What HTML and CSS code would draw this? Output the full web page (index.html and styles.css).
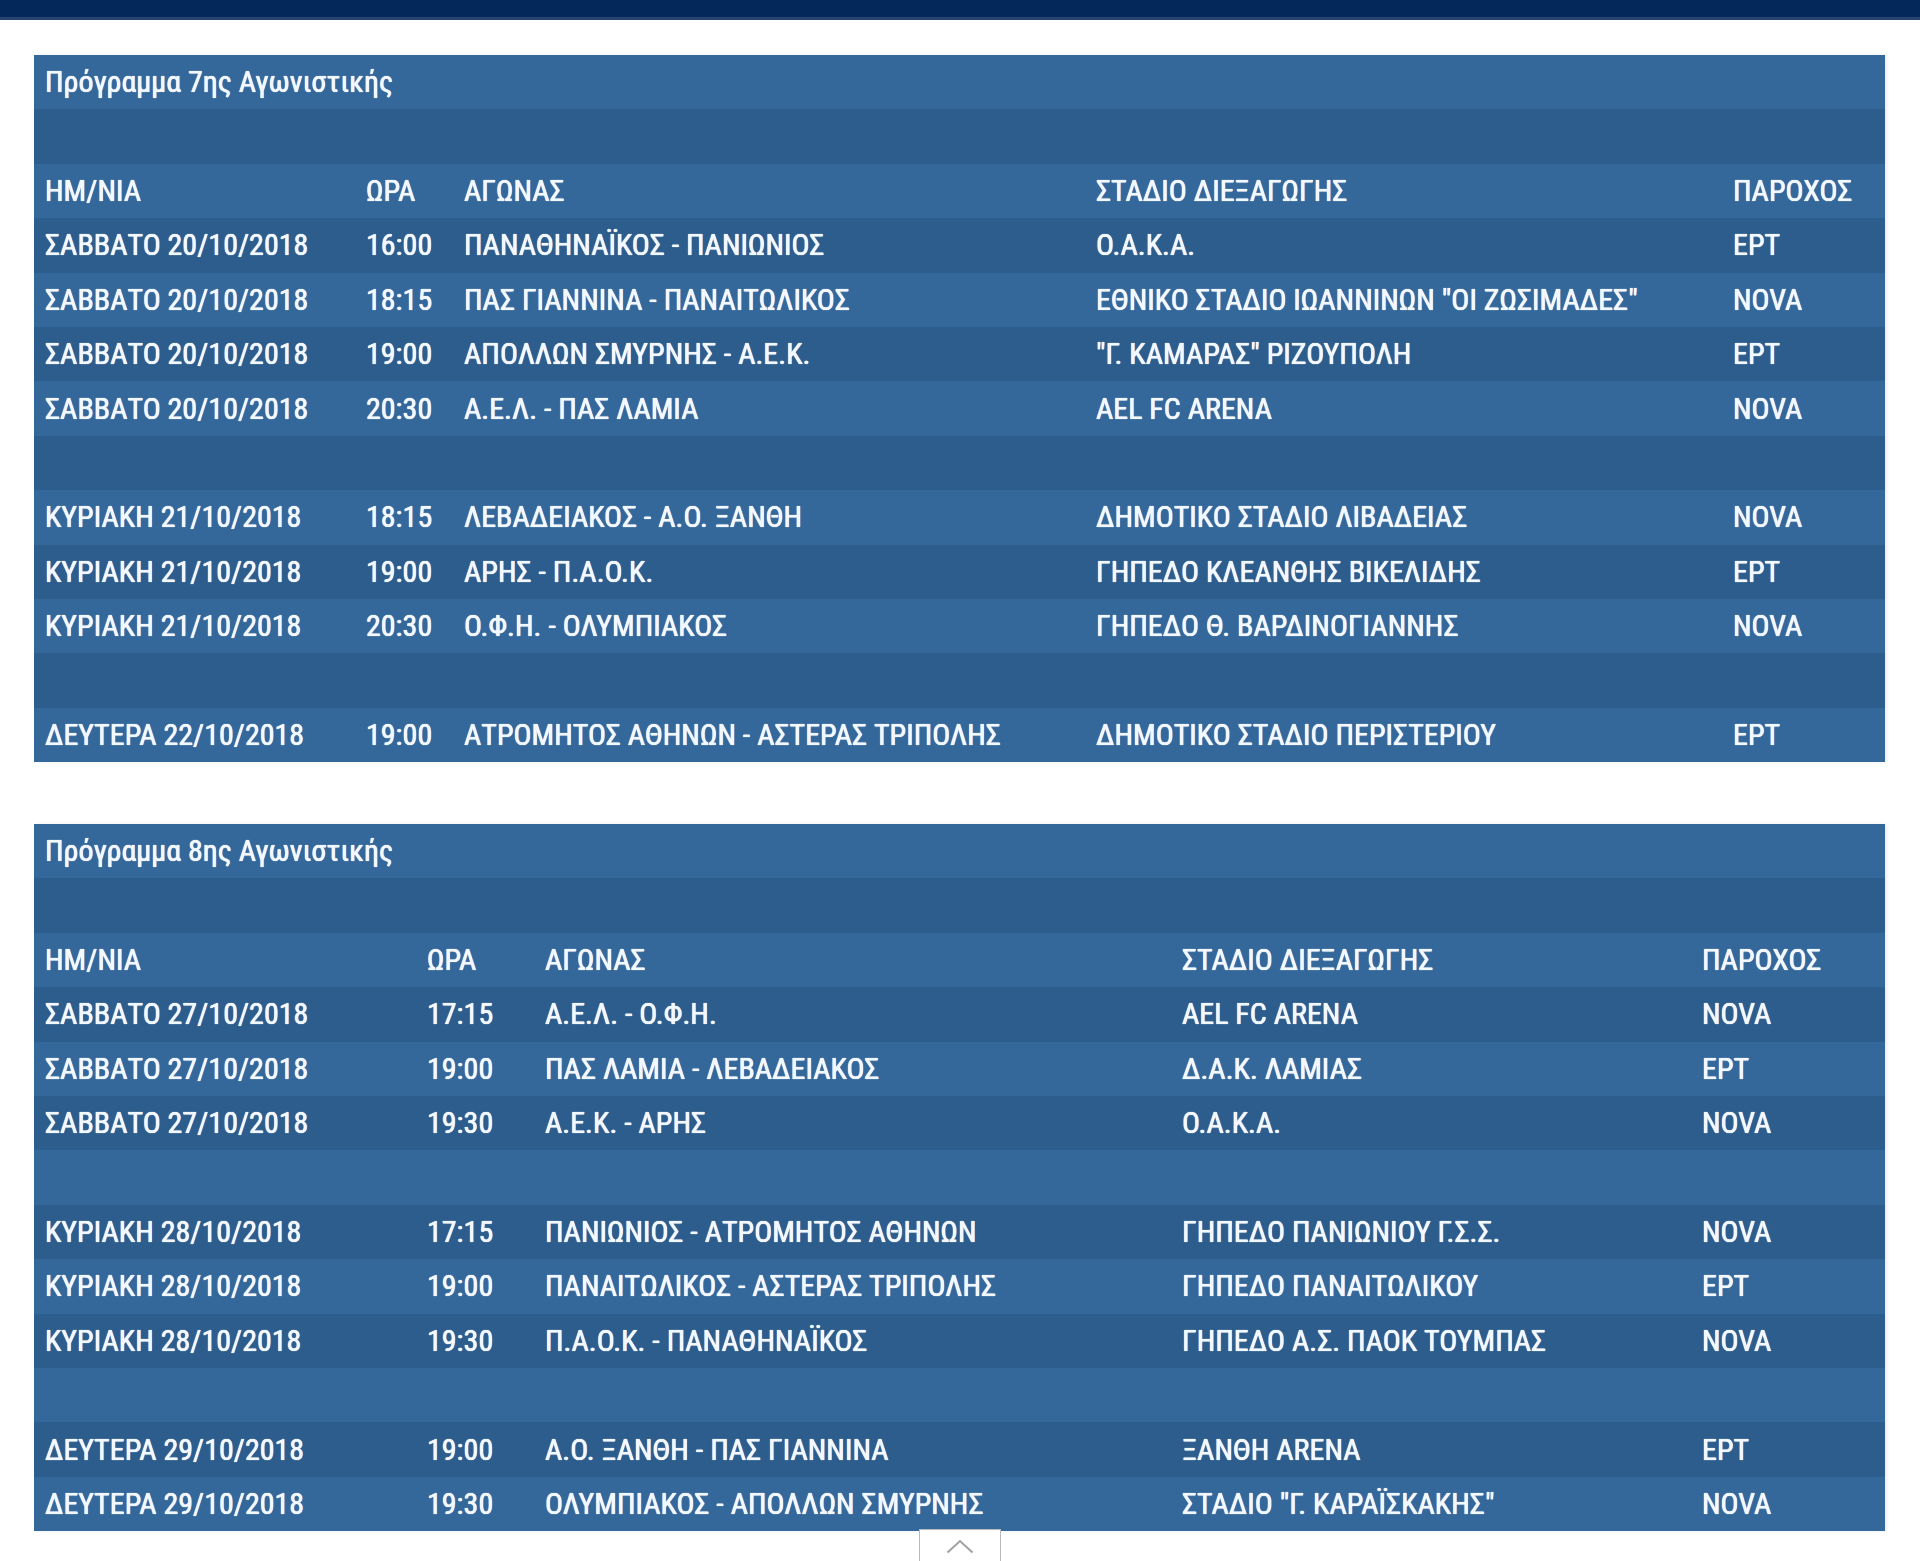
FILE: index.html
```html
<!DOCTYPE html>
<html lang="el">
<head>
<meta charset="utf-8">
<title>Πρόγραμμα Αγωνιστικών</title>
<link rel="stylesheet" href="styles.css">
</head>
<body>
<div class="topbar"></div>
<main class="content">
  <table class="fixtures t7">
    <colgroup>
      <col class="c1"><col class="c2"><col class="c3"><col class="c4"><col class="c5">
    </colgroup>
    <tbody>
      <tr class="title"><td colspan="5">Πρόγραμμα 7ης Αγωνιστικής</td></tr>
      <tr class="blank"><td colspan="5"></td></tr>
      <tr class="head"><td>ΗΜ/ΝΙΑ</td><td>ΩΡΑ</td><td>ΑΓΩΝΑΣ</td><td>ΣΤΑΔΙΟ ΔΙΕΞΑΓΩΓΗΣ</td><td>ΠΑΡΟΧΟΣ</td></tr>
      <tr><td>ΣΑΒΒΑΤΟ 20/10/2018</td><td>16:00</td><td>ΠΑΝΑΘΗΝΑΪΚΟΣ - ΠΑΝΙΩΝΙΟΣ</td><td>Ο.Α.Κ.Α.</td><td>ΕΡΤ</td></tr>
      <tr><td>ΣΑΒΒΑΤΟ 20/10/2018</td><td>18:15</td><td>ΠΑΣ ΓΙΑΝΝΙΝΑ - ΠΑΝΑΙΤΩΛΙΚΟΣ</td><td>ΕΘΝΙΚΟ ΣΤΑΔΙΟ ΙΩΑΝΝΙΝΩΝ "ΟΙ ΖΩΣΙΜΑΔΕΣ"</td><td>NOVA</td></tr>
      <tr><td>ΣΑΒΒΑΤΟ 20/10/2018</td><td>19:00</td><td>ΑΠΟΛΛΩΝ ΣΜΥΡΝΗΣ - Α.Ε.Κ.</td><td>"Γ. ΚΑΜΑΡΑΣ" ΡΙΖΟΥΠΟΛΗ</td><td>ΕΡΤ</td></tr>
      <tr><td>ΣΑΒΒΑΤΟ 20/10/2018</td><td>20:30</td><td>Α.Ε.Λ. - ΠΑΣ ΛΑΜΙΑ</td><td>AEL FC ARENA</td><td>NOVA</td></tr>
      <tr class="blank"><td colspan="5"></td></tr>
      <tr><td>ΚΥΡΙΑΚΗ 21/10/2018</td><td>18:15</td><td>ΛΕΒΑΔΕΙΑΚΟΣ - Α.Ο. ΞΑΝΘΗ</td><td>ΔΗΜΟΤΙΚΟ ΣΤΑΔΙΟ ΛΙΒΑΔΕΙΑΣ</td><td>NOVA</td></tr>
      <tr><td>ΚΥΡΙΑΚΗ 21/10/2018</td><td>19:00</td><td>ΑΡΗΣ - Π.Α.Ο.Κ.</td><td>ΓΗΠΕΔΟ ΚΛΕΑΝΘΗΣ ΒΙΚΕΛΙΔΗΣ</td><td>ΕΡΤ</td></tr>
      <tr><td>ΚΥΡΙΑΚΗ 21/10/2018</td><td>20:30</td><td>Ο.Φ.Η. - ΟΛΥΜΠΙΑΚΟΣ</td><td>ΓΗΠΕΔΟ Θ. ΒΑΡΔΙΝΟΓΙΑΝΝΗΣ</td><td>NOVA</td></tr>
      <tr class="blank"><td colspan="5"></td></tr>
      <tr><td>ΔΕΥΤΕΡΑ 22/10/2018</td><td>19:00</td><td>ΑΤΡΟΜΗΤΟΣ ΑΘΗΝΩΝ - ΑΣΤΕΡΑΣ ΤΡΙΠΟΛΗΣ</td><td>ΔΗΜΟΤΙΚΟ ΣΤΑΔΙΟ ΠΕΡΙΣΤΕΡΙΟΥ</td><td>ΕΡΤ</td></tr>
    </tbody>
  </table>

  <table class="fixtures t8">
    <colgroup>
      <col class="c1"><col class="c2"><col class="c3"><col class="c4"><col class="c5">
    </colgroup>
    <tbody>
      <tr class="title"><td colspan="5">Πρόγραμμα 8ης Αγωνιστικής</td></tr>
      <tr class="blank"><td colspan="5"></td></tr>
      <tr class="head"><td>ΗΜ/ΝΙΑ</td><td>ΩΡΑ</td><td>ΑΓΩΝΑΣ</td><td>ΣΤΑΔΙΟ ΔΙΕΞΑΓΩΓΗΣ</td><td>ΠΑΡΟΧΟΣ</td></tr>
      <tr><td>ΣΑΒΒΑΤΟ 27/10/2018</td><td>17:15</td><td>Α.Ε.Λ. - Ο.Φ.Η.</td><td>AEL FC ARENA</td><td>NOVA</td></tr>
      <tr><td>ΣΑΒΒΑΤΟ 27/10/2018</td><td>19:00</td><td>ΠΑΣ ΛΑΜΙΑ - ΛΕΒΑΔΕΙΑΚΟΣ</td><td>Δ.Α.Κ. ΛΑΜΙΑΣ</td><td>ΕΡΤ</td></tr>
      <tr><td>ΣΑΒΒΑΤΟ 27/10/2018</td><td>19:30</td><td>Α.Ε.Κ. - ΑΡΗΣ</td><td>Ο.Α.Κ.Α.</td><td>NOVA</td></tr>
      <tr class="blank"><td colspan="5"></td></tr>
      <tr><td>ΚΥΡΙΑΚΗ 28/10/2018</td><td>17:15</td><td>ΠΑΝΙΩΝΙΟΣ - ΑΤΡΟΜΗΤΟΣ ΑΘΗΝΩΝ</td><td>ΓΗΠΕΔΟ ΠΑΝΙΩΝΙΟΥ Γ.Σ.Σ.</td><td>NOVA</td></tr>
      <tr><td>ΚΥΡΙΑΚΗ 28/10/2018</td><td>19:00</td><td>ΠΑΝΑΙΤΩΛΙΚΟΣ - ΑΣΤΕΡΑΣ ΤΡΙΠΟΛΗΣ</td><td>ΓΗΠΕΔΟ ΠΑΝΑΙΤΩΛΙΚΟΥ</td><td>ΕΡΤ</td></tr>
      <tr><td>ΚΥΡΙΑΚΗ 28/10/2018</td><td>19:30</td><td>Π.Α.Ο.Κ. - ΠΑΝΑΘΗΝΑΪΚΟΣ</td><td>ΓΗΠΕΔΟ Α.Σ. ΠΑΟΚ ΤΟΥΜΠΑΣ</td><td>NOVA</td></tr>
      <tr class="blank"><td colspan="5"></td></tr>
      <tr><td>ΔΕΥΤΕΡΑ 29/10/2018</td><td>19:00</td><td>Α.Ο. ΞΑΝΘΗ - ΠΑΣ ΓΙΑΝΝΙΝΑ</td><td>ΞΑΝΘΗ ARENA</td><td>ΕΡΤ</td></tr>
      <tr><td>ΔΕΥΤΕΡΑ 29/10/2018</td><td>19:30</td><td>ΟΛΥΜΠΙΑΚΟΣ - ΑΠΟΛΛΩΝ ΣΜΥΡΝΗΣ</td><td>ΣΤΑΔΙΟ "Γ. ΚΑΡΑΪΣΚΑΚΗΣ"</td><td>NOVA</td></tr>
    </tbody>
  </table>
</main>
<a class="to-top" href="#" aria-label="Επιστροφή στην κορυφή">
  <svg width="28" height="15" viewBox="0 0 28 15" aria-hidden="true"><polyline points="1.5,13.5 14,2 26.5,13.5" fill="none" stroke="#a0a0a0" stroke-width="2"/></svg>
</a>
</body>
</html>
```

FILE: styles.css
```css
html, body {
  margin: 0;
  padding: 0;
  background: #ffffff;
}

body {
  font-family: "Roboto Condensed", "Liberation Sans Narrow", "Roboto", "Noto Sans", sans-serif;
  font-stretch: condensed;
  color: #f2f8ff;
  overflow: hidden;
}

.topbar {
  height: 17px;
  background: #05285a;
  border-bottom: 3px solid #26456e;
}

.content {
  padding: 35px 35px 0 34px;
}

.fixtures {
  width: 1851px;
  border-collapse: collapse;
  border-spacing: 0;
  table-layout: fixed;
  margin: 0 0 62px 0;
  box-shadow: 2px 0 3px rgba(0, 0, 0, 0.08);
}

.fixtures tr {
  height: 54.4px;
}

.fixtures tr:nth-child(odd) {
  background: #34689b;
}

.fixtures tr:nth-child(even) {
  background: #2d5d8c;
}

.fixtures td {
  padding: 0 0 0 11px;
  font-size: 30px;
  line-height: 34px;
  white-space: nowrap;
  overflow: hidden;
  vertical-align: middle;
  text-shadow: 0 0 0.7px #ffffff, 0 0 0.7px #ffffff;
}

.fixtures .title td {
  font-size: 30px;
}

.t7 .c1 { width: 321px; }
.t7 .c2 { width: 98px; }
.t7 .c3 { width: 632px; }
.t7 .c4 { width: 637px; }
.t7 .c5 { width: 163px; }

.t8 .c1 { width: 382px; }
.t8 .c2 { width: 118px; }
.t8 .c3 { width: 637px; }
.t8 .c4 { width: 520px; }
.t8 .c5 { width: 194px; }

.to-top {
  position: fixed;
  left: 919px;
  bottom: -14px;
  width: 82px;
  height: 46px;
  box-sizing: border-box;
  background: #ffffff;
  border: 1px solid #b9b9b9;
  display: flex;
  justify-content: center;
  padding-top: 9px;
}
```
